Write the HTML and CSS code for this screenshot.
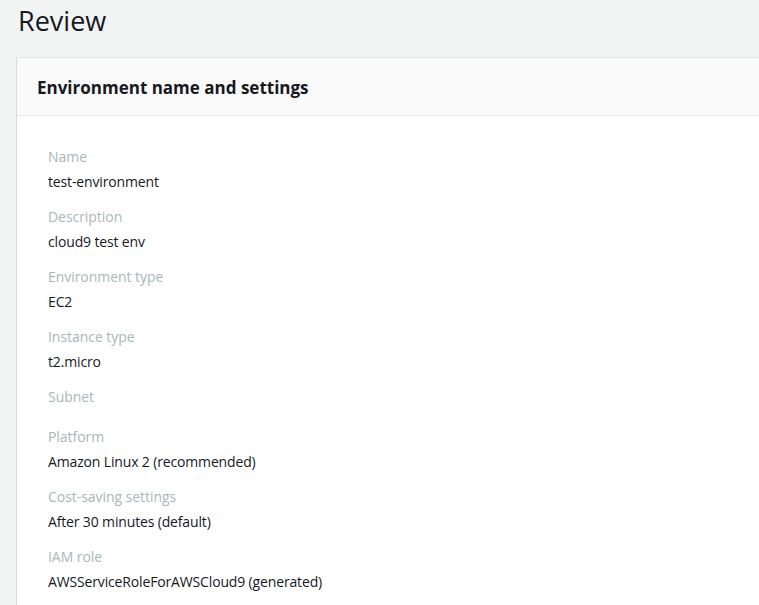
FILE: index.html
```html
<!DOCTYPE html>
<html>
<head>
<meta charset="utf-8">
<link rel="stylesheet" href="styles.css">
</head>
<body>
<div class="page">
  <h1 class="title">Review</h1>
  <section class="card">
    <header class="card-header">
      <h2>Environment name and settings</h2>
    </header>
    <div class="card-body">
      <div class="field"><div class="label">Name</div><div class="value">test-environment</div></div>
      <div class="field"><div class="label">Description</div><div class="value">cloud9 test env</div></div>
      <div class="field"><div class="label">Environment type</div><div class="value">EC2</div></div>
      <div class="field"><div class="label">Instance type</div><div class="value">t2.micro</div></div>
      <div class="field"><div class="label">Subnet</div><div class="value"></div></div>
      <div class="field"><div class="label">Platform</div><div class="value">Amazon Linux 2 (recommended)</div></div>
      <div class="field"><div class="label">Cost-saving settings</div><div class="value">After 30 minutes (default)</div></div>
      <div class="field"><div class="label">IAM role</div><div class="value">AWSServiceRoleForAWSCloud9 (generated)</div></div>
    </div>
  </section>
</div>
</body>
</html>
```
FILE: styles.css
```css
html, body {
  margin: 0;
  padding: 0;
  background: #f2f3f3;
  overflow: hidden;
  height: 605px;
}
.page {
  font-family: "Open Sans", "Noto Sans", sans-serif;
  color: #16191f;
  padding-left: 16px;
  width: 1000px;
}
.title {
  margin: 0;
  font-size: 27px;
  font-weight: 400;
  line-height: 42px;
  padding-left: 2px;
  height: 57px;
  box-sizing: border-box;
}
.card {
  background: #fff;
  border-left: 1px solid #d5dbdb;
  border-top: 1px solid #e1e4e4;
  width: 900px;
}
.card-header {
  background: #fafafa;
  border-bottom: 1px solid #eaeded;
  height: 58px;
  box-sizing: border-box;
  display: flex;
  align-items: center;
  padding-left: 20px;
  padding-top: 2px;
}
.card-header h2 {
  margin: 0;
  font-size: 17px;
  font-weight: 700;
  line-height: 24px;
}
.card-body {
  padding: 31px 0 40px 31px;
  display: flex;
  flex-direction: column;
  gap: 15px;
}
.field {
  display: flex;
  flex-direction: column;
  gap: 5px;
}
.label {
  font-size: 14px;
  line-height: 20px;
  color: #aab7b8;
  letter-spacing: -0.05px;
}
.value {
  font-size: 14px;
  line-height: 20px;
  color: #16191f;
  letter-spacing: -0.15px;
}
.value:empty {
  height: 0;
}
```
